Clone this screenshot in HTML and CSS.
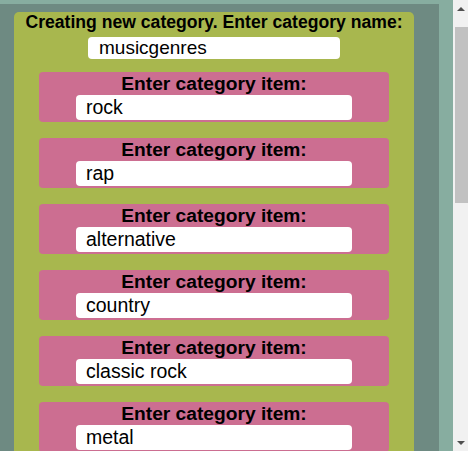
FILE: index.html
```html
<!DOCTYPE html>
<html lang="en">
<head>
<meta charset="utf-8">
<title>New category</title>
<link rel="stylesheet" href="styles.css">
</head>
<body>
<div class="page">
  <div class="frame">
    <form class="card">
      <p class="title">Creating new category. Enter category name:</p>
      <input class="name-input" type="text" value="musicgenres">
      <div class="item"><p class="item-label">Enter category item:</p><input class="item-input" type="text" value="rock"></div>
      <div class="item"><p class="item-label">Enter category item:</p><input class="item-input" type="text" value="rap"></div>
      <div class="item"><p class="item-label">Enter category item:</p><input class="item-input" type="text" value="alternative"></div>
      <div class="item"><p class="item-label">Enter category item:</p><input class="item-input" type="text" value="country"></div>
      <div class="item"><p class="item-label">Enter category item:</p><input class="item-input" type="text" value="classic rock"></div>
      <div class="item"><p class="item-label">Enter category item:</p><input class="item-input" type="text" value="metal"></div>
    </form>
  </div>
</div>
<div class="scrollbar" aria-hidden="true">
  <div class="sb-button"><span class="arrow-up"></span></div>
  <div class="sb-thumb"></div>
  <div class="sb-track"></div>
  <div class="sb-button"><span class="arrow-down"></span></div>
</div>
</body>
</html>
```
FILE: styles.css
```css
html, body {
  margin: 0;
  height: 451px;
  overflow: hidden;
}
body {
  display: flex;
  background: #87ada0;
  font-family: "Liberation Sans", Arial, sans-serif;
  color: #000;
}
.page {
  flex: 1;
  padding-top: 4px;
  overflow: hidden;
}
.frame {
  width: 439px;
  box-sizing: border-box;
  background: #6e8a82;
  padding: 8px 25px 8px 14px;
}
.card {
  width: 400px;
  margin: 0;
  background: #a8b74e;
  border-radius: 5px;
  display: flex;
  flex-direction: column;
  align-items: center;
}
.title {
  margin: 0;
  font-weight: bold;
  font-size: 17.6px;
  line-height: 20px;
  text-align: center;
  white-space: nowrap;
}
.name-input {
  width: 252px;
  height: 22px;
  margin: 5px 0 13px;
  box-sizing: border-box;
  border: none;
  border-radius: 4px;
  background: #fff;
  padding: 0 0 0 11px;
  font-family: "Liberation Sans", Arial, sans-serif;
  font-size: 19px;
  color: #000;
  outline: none;
}
.item {
  width: 350px;
  height: 50px;
  margin-bottom: 16px;
  background: #cc6e91;
  border-radius: 4px;
  display: flex;
  flex-direction: column;
  align-items: center;
}
.item-label {
  margin: 0;
  font-weight: bold;
  font-size: 19.2px;
  line-height: 23px;
  text-align: center;
}
.item-input {
  width: 276px;
  height: 25px;
  box-sizing: border-box;
  border: none;
  border-radius: 4px;
  background: #fff;
  padding: 0 0 0 10px;
  font-family: "Liberation Sans", Arial, sans-serif;
  font-size: 19.5px;
  color: #000;
  outline: none;
}
.scrollbar {
  width: 15px;
  flex: none;
  background: #f1f1f1;
  display: flex;
  flex-direction: column;
}
.sb-button {
  height: 17px;
  flex: none;
  display: flex;
  align-items: center;
  justify-content: center;
}
.arrow-up {
  width: 0;
  height: 0;
  border-left: 4px solid transparent;
  border-right: 4px solid transparent;
  border-bottom: 4px solid #505050;
}
.arrow-down {
  width: 0;
  height: 0;
  border-left: 4px solid transparent;
  border-right: 4px solid transparent;
  border-top: 4px solid #505050;
}
.sb-thumb {
  height: 176px;
  margin: 10px 0 0 2px;
  background: #c1c1c1;
  flex: none;
}
.sb-track {
  flex: 1;
}
```
